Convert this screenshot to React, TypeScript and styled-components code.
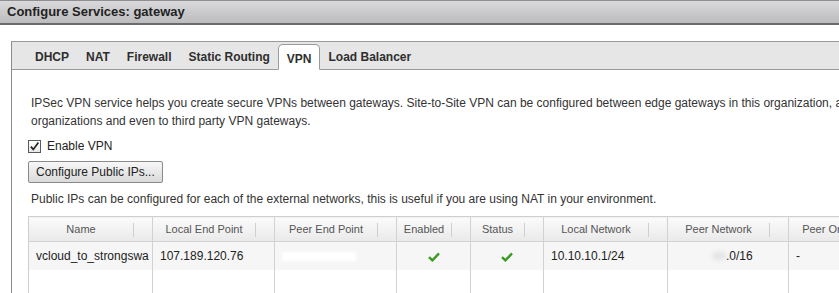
import * as React from "react";
import styled, { createGlobalStyle } from "styled-components";

const GlobalStyle = createGlobalStyle`
  html, body {
    margin: 0;
    padding: 0;
    background: #ffffff;
    overflow: hidden;
  }
  body {
    font-family: "Liberation Sans", Arial, Helvetica, sans-serif;
    color: #333333;
  }
`;

interface Column {
  title: string;
  width: number;
}

interface VpnRow {
  name: string;
  localEndPoint: string;
  peerEndPoint: string;
  enabled: boolean;
  status: boolean;
  localNetwork: string;
  peerNetwork: string;
  peerOrg: string;
}

const columns: Column[] = [
  { title: "Name", width: 124 },
  { title: "Local End Point", width: 122 },
  { title: "Peer End Point", width: 122 },
  { title: "Enabled", width: 74 },
  { title: "Status", width: 73 },
  { title: "Local Network", width: 124 },
  { title: "Peer Network", width: 121 },
  { title: "Peer Organization", width: 135 },
];

const tableWidth = columns.reduce((sum, c) => sum + c.width, 0);

const rows: VpnRow[] = [
  {
    name: "vcloud_to_strongswan",
    localEndPoint: "107.189.120.76",
    peerEndPoint: "",
    enabled: true,
    status: true,
    localNetwork: "10.10.10.1/24",
    peerNetwork: ".0/16",
    peerOrg: "-",
  },
];

const tabs = ["DHCP", "NAT", "Firewall", "Static Routing", "VPN", "Load Balancer"];

const TitleBar = styled.div`
  height: 21px;
  border-top: 1px solid #8f8f8f;
  border-bottom: 2px solid #6a6a6a;
  background: linear-gradient(to bottom, #d9d9db, #bcbcbe);
  display: flex;
  align-items: center;
  padding-left: 7px;
  padding-bottom: 1px;
  font-size: 13px;
  font-weight: 700;
  color: #222222;
`;

const Content = styled.div`
  padding: 16px 0 0 11px;
`;

const Panel = styled.div`
  width: 1100px;
  height: 260px;
  border-left: 1px solid #8c8c8c;
  border-top: 1px solid #9a9a9a;
`;

const TabBar = styled.div`
  height: 27px;
  background: #e6e6e6;
  border-bottom: 1px solid #9a9a9a;
  display: flex;
  align-items: flex-end;
  padding-left: 14px;
`;

const Tab = styled.div<{ $active?: boolean }>`
  height: 26px;
  margin-bottom: -1px;
  padding: ${(p) => (p.$active ? "3px" : "0")} 7px 0 8px;
  display: flex;
  align-items: center;
  box-sizing: border-box;
  font-size: 12px;
  font-weight: 700;
  color: #2e2e2e;
  border: 1px solid ${(p) => (p.$active ? "#9a9a9a" : "transparent")};
  border-bottom: 1px solid ${(p) => (p.$active ? "#ffffff" : "transparent")};
  border-radius: 5px 5px 0 0;
  background: ${(p) => (p.$active ? "#ffffff" : "transparent")};
`;

const Body = styled.div`
  padding: 24px 0 0 16px;
`;

const Paragraph = styled.p`
  margin: 0;
  padding-left: 3px;
  font-size: 12px;
  line-height: 18px;
  color: #333333;
  white-space: nowrap;
`;

const CheckRow = styled.label`
  margin-top: 7px;
  height: 18px;
  display: flex;
  align-items: center;
  gap: 6px;
  font-size: 12px;
  color: #222222;
`;

const Button = styled.button`
  margin-top: 6px;
  height: 22px;
  padding: 0 7px;
  font-family: inherit;
  font-size: 12px;
  color: #222222;
  border: 1px solid #8a8a8a;
  border-radius: 2px;
  background: linear-gradient(to bottom, #f7f7f7, #dadada);
  display: block;
`;

const Note = styled(Paragraph)`
  margin-top: 7px;
`;

const Table = styled.table<{ $width: number }>`
  width: ${(p) => p.$width}px;
  margin-top: 8px;
  border-collapse: collapse;
  table-layout: fixed;
  border-top: 1px solid #cfcfcf;
  border-left: 1px solid #cfcfcf;
`;

const HeadCell = styled.th`
  height: 24px;
  padding: 0 19px 0 0;
  position: relative;
  font-size: 11px;
  font-weight: 400;
  color: #555555;
  text-align: center;
  white-space: nowrap;
  overflow: hidden;
  background: linear-gradient(to bottom, #fbfbfb, #e9e9e9);
  border-right: 1px solid #d2d2d2;
  border-bottom: 1px solid #d2d2d2;

  &::after {
    content: "";
    position: absolute;
    right: 18px;
    top: 6px;
    height: 14px;
    border-left: 1px solid #cfcfcf;
  }
`;

const Cell = styled.td<{ $center?: boolean; $filled?: boolean }>`
  height: 28px;
  padding: 0 0 0 ${(p) => (p.$center ? "0" : "7px")};
  font-size: 12px;
  color: #222222;
  white-space: nowrap;
  overflow: hidden;
  text-align: ${(p) => (p.$center ? "center" : "left")};
  background: ${(p) => (p.$filled ? "#f6f6f6" : "#ffffff")};
  border-right: 1px solid #d2d2d2;
`;

const CellText = styled.div`
  overflow: hidden;
  margin-right: 3px;
`;

const Masked = styled.span<{ $w: number }>`
  display: inline-block;
  vertical-align: middle;
  width: ${(p) => p.$w}px;
  height: 9px;
  background: #ffffff;
  filter: blur(1.5px);
`;

const PeerNet = styled.span`
  padding-left: 38px;
  display: inline-flex;
  align-items: center;
`;

const Smudge = styled.span`
  display: inline-block;
  width: 12px;
  height: 8px;
  background: #e4e4e4;
  filter: blur(2px);
  margin-right: 1px;
`;

const CheckBox = () => (
  <svg width="13" height="13" viewBox="0 0 13 13">
    <defs>
      <linearGradient id="cb" x1="0" y1="0" x2="0" y2="1">
        <stop offset="0" stopColor="#ffffff" />
        <stop offset="1" stopColor="#e8e8e8" />
      </linearGradient>
    </defs>
    <rect x="0.5" y="0.5" width="12" height="12" fill="url(#cb)" stroke="#5a5a5a" />
    <path d="M2.8 6.6 L5.3 9.4 L10.4 2.6" fill="none" stroke="#222" strokeWidth="1.7" />
  </svg>
);

const GreenCheck = () => (
  <svg width="12" height="10" viewBox="0 0 12 10" style={{ verticalAlign: "middle" }}>
    <path d="M1 5.2 L4.4 8.4 L11 1.4" fill="none" stroke="#3b9a22" strokeWidth="2.4" />
  </svg>
);

export default function App() {
  return (
    <>
      <GlobalStyle />
      <TitleBar>Configure Services: gateway</TitleBar>
      <Content>
        <Panel>
          <TabBar>
            {tabs.map((t) => (
              <Tab key={t} $active={t === "VPN"}>
                {t}
              </Tab>
            ))}
          </TabBar>
          <Body>
            <Paragraph>
              IPSec VPN service helps you create secure VPNs between gateways. Site-to-Site VPN can be
              configured between edge gateways in this organization, across
              <br />
              organizations and even to third party VPN gateways.
            </Paragraph>
            <CheckRow>
              <CheckBox />
              Enable VPN
            </CheckRow>
            <Button>Configure Public IPs...</Button>
            <Note>
              Public IPs can be configured for each of the external networks, this is useful if you are
              using NAT in your environment.
            </Note>
            <Table $width={tableWidth}>
              <colgroup>
                {columns.map((c) => (
                  <col key={c.title} style={{ width: c.width }} />
                ))}
              </colgroup>
              <thead>
                <tr>
                  {columns.map((c) => (
                    <HeadCell key={c.title}>{c.title}</HeadCell>
                  ))}
                </tr>
              </thead>
              <tbody>
                {rows.map((r) => (
                  <tr key={r.name}>
                    <Cell $filled>
                      <CellText>{r.name}</CellText>
                    </Cell>
                    <Cell $filled>{r.localEndPoint}</Cell>
                    <Cell $filled>
                      <Masked $w={74} />
                    </Cell>
                    <Cell $filled $center>
                      {r.enabled && <GreenCheck />}
                    </Cell>
                    <Cell $filled $center>
                      {r.status && <GreenCheck />}
                    </Cell>
                    <Cell $filled>{r.localNetwork}</Cell>
                    <Cell $filled>
                      <PeerNet>
                        <Smudge />
                        {r.peerNetwork}
                      </PeerNet>
                    </Cell>
                    <Cell $filled>{r.peerOrg}</Cell>
                  </tr>
                ))}
                <tr>
                  {columns.map((c) => (
                    <Cell key={c.title} />
                  ))}
                </tr>
              </tbody>
            </Table>
          </Body>
        </Panel>
      </Content>
    </>
  );
}
